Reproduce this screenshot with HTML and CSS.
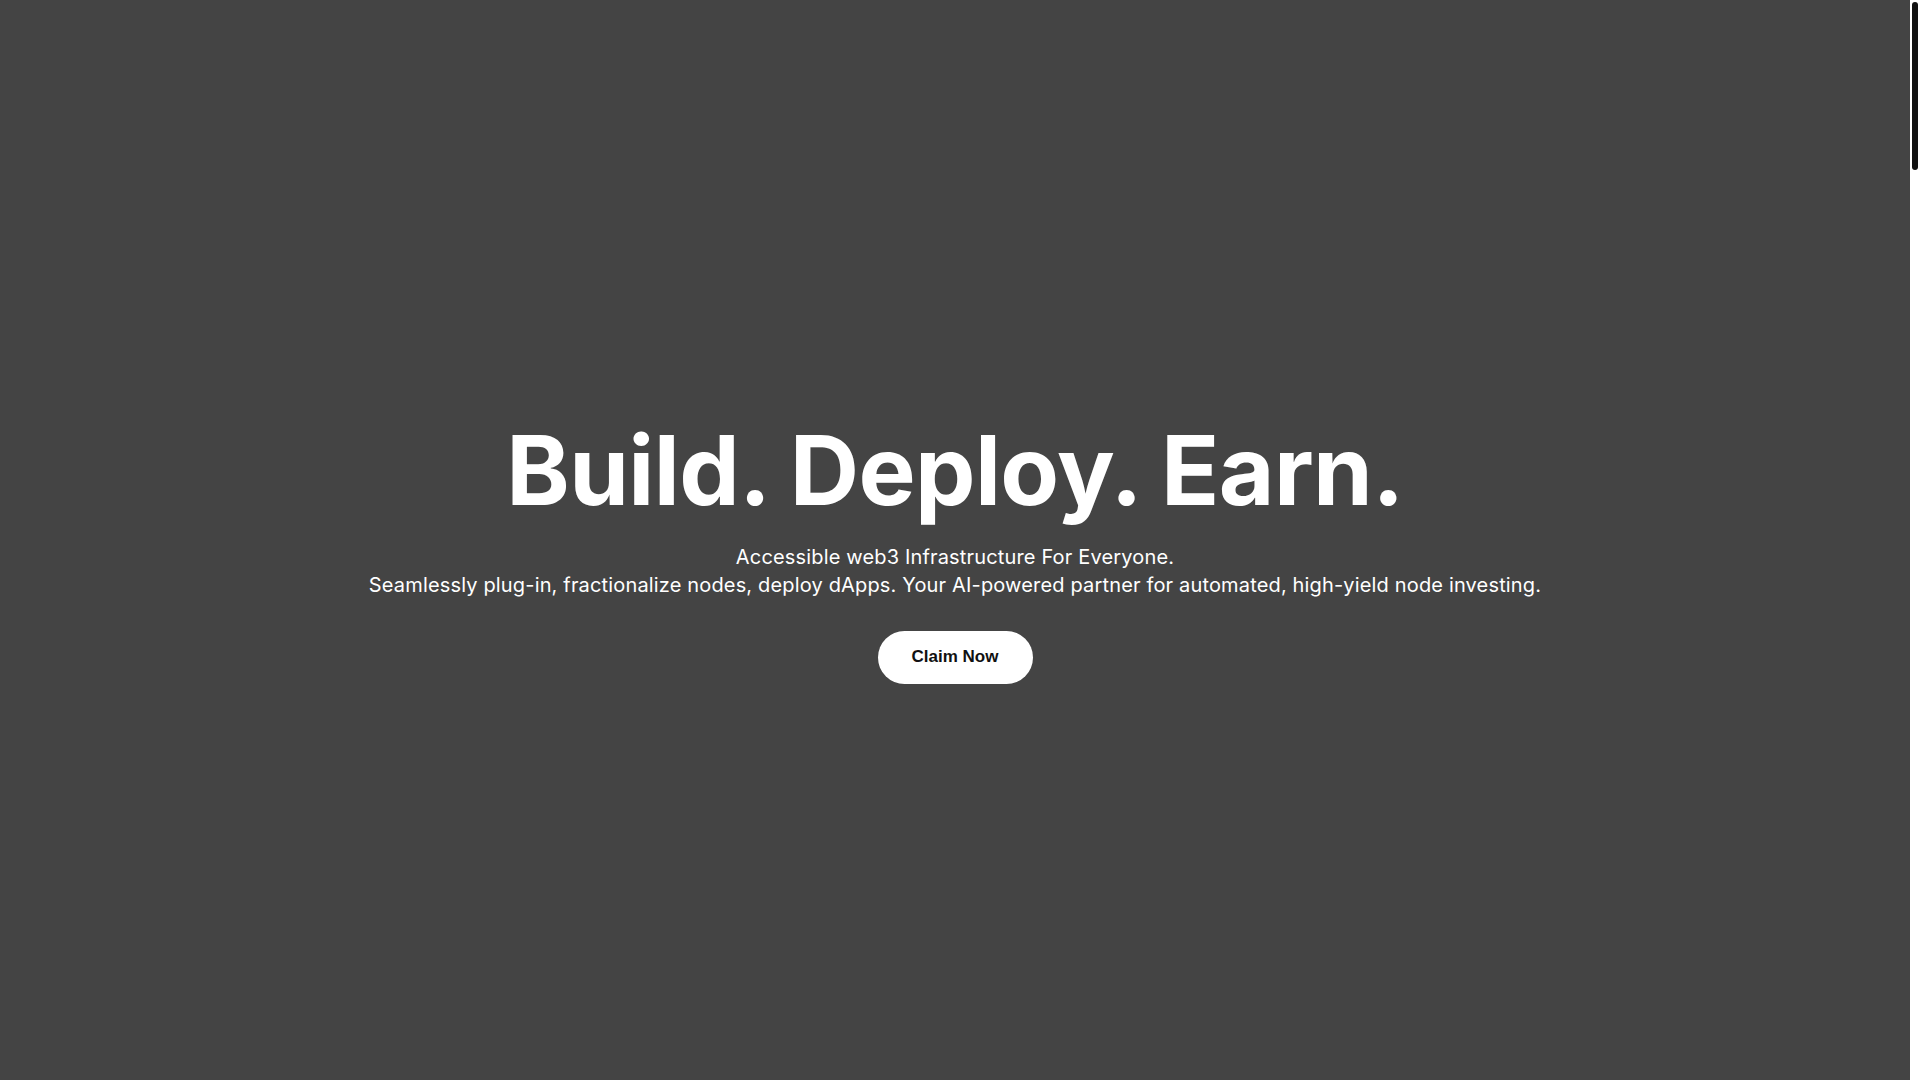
FILE: index.html
```html
<!DOCTYPE html>
<html lang="en">
<head>
<meta charset="utf-8">
<title>Build. Deploy. Earn.</title>
<link rel="stylesheet" href="styles.css">
</head>
<body>
<div class="layout">
  <main class="hero">
    <h1 class="hero-title">Build. Deploy. Earn.</h1>
    <p class="hero-text">Accessible web3 Infrastructure For Everyone.<br>Seamlessly plug-in, fractionalize nodes, deploy dApps. Your AI-powered partner for automated, high-yield node investing.</p>
    <a class="cta" href="#">Claim Now</a>
  </main>
  <div class="scrollbar" aria-hidden="true"><span class="scrollbar-thumb"></span></div>
</div>
</body>
</html>
```
FILE: styles.css
```css
html, body {
  margin: 0;
  padding: 0;
  background: #444444;
  overflow: hidden;
}
body {
  font-family: "Inter", "Liberation Sans", sans-serif;
  color: #ffffff;
}
.layout {
  display: flex;
  height: 1080px;
}
.hero {
  flex: 1;
  box-sizing: border-box;
  display: flex;
  flex-direction: column;
  align-items: center;
  padding-top: 418px;
  text-align: center;
}
.hero-title {
  margin: 0;
  font-family: "Inter", sans-serif;
  font-weight: 700;
  font-size: 96px;
  line-height: 1.1;
  letter-spacing: -0.6px;
  color: #ffffff;
}
.hero-text {
  margin: 19px 0 0;
  font-size: 20px;
  line-height: 28px;
  letter-spacing: 0.16px;
  color: #ffffff;
}
.cta {
  margin-top: 32px;
  display: inline-flex;
  align-items: center;
  justify-content: center;
  width: 155px;
  height: 53px;
  border-radius: 27px;
  background: #ffffff;
  color: #111111;
  text-decoration: none;
  font-family: "Liberation Sans", Arial, sans-serif;
  font-weight: 700;
  font-size: 17px;
}
.scrollbar {
  width: 10px;
  background: #ffffff;
  display: flex;
  justify-content: center;
  padding-top: 2px;
  box-sizing: border-box;
}
.scrollbar-thumb {
  width: 6px;
  height: 168px;
  border-radius: 3px;
  background: #111111;
}
```
